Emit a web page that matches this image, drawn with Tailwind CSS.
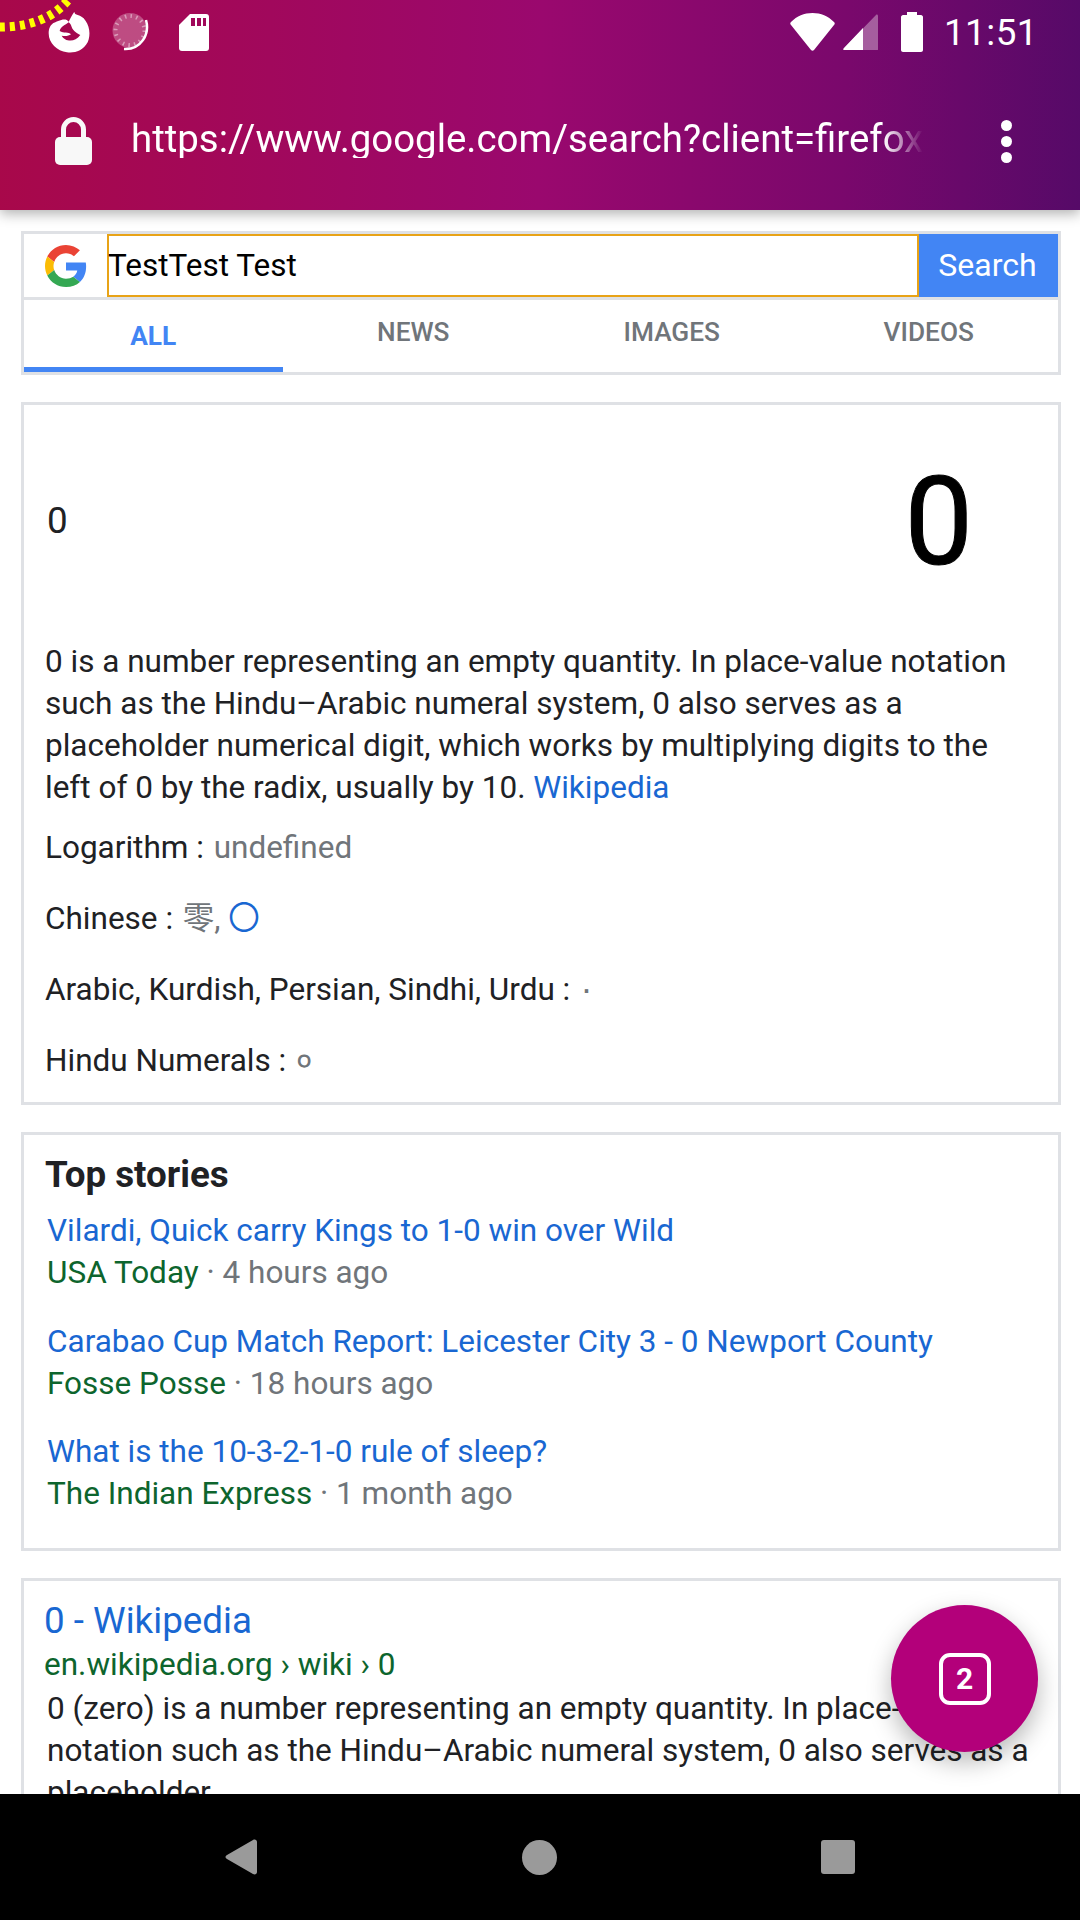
<!DOCTYPE html>
<html lang="en">
<head>
  <meta charset="UTF-8" />
  <meta name="viewport" content="width=device-width, initial-scale=1.0" />
  <title>Google search in Firefox</title>
  <script src="https://cdn.jsdelivr.net/npm/@tailwindcss/browser@4"></script>
</head>
<body class="font-['Roboto',sans-serif] text-[#202124] bg-white">
  <div class="relative w-[1080px] h-[1920px] overflow-hidden flex flex-col">

    <!-- Status bar + url bar -->
    <header class="relative z-10 h-[210px] shrink-0 bg-[linear-gradient(91deg,#a8084a_0%,#9a086e_50%,#7a086c_78%,#560a68_100%)] shadow-[0_4px_12px_rgba(0,0,0,0.3)] text-white">
      <div class="h-[64px] flex items-center pl-[47px] pr-[42px]">
        <svg class="w-[45px] h-[45px]" viewBox="140 25 135 135"><path fill="#fff" d="M222 30C222 42 240 38 250 50 268 70 272 100 262 122 248 148 222 155 200 152 170 148 145 125 145 95 145 80 150 72 158 65 170 60 195 45 205 60 210 50 215 40 222 30Z"/><path fill="#a4084f" d="M205 62C195 70 180 76 178 88 190 96 205 90 212 98 205 104 192 104 184 102 192 118 222 126 240 100 232 96 218 88 214 76 212 70 210 66 205 62Z"/></svg>
        <svg class="w-[38px] h-[40px] ml-[20px]" viewBox="0 0 38 40" fill="none"><circle cx="18" cy="18.500" r="17.500" fill="#fff" fill-opacity="0.28"/><circle cx="18" cy="18.500" r="14.500" stroke="#fff" stroke-opacity="0.45" stroke-width="4" stroke-dasharray="1.500 4.200"/><path d="M34 8C38 22 29 38 12 37" stroke="#fff" stroke-width="2.500"/></svg>
        <svg class="w-[30px] h-[37px] ml-[29px]" viewBox="0 0 30 37"><path d="M11 0h16c2 0 3 1 3 3v31c0 2-1 3-3 3H3c-2 0-3-1-3-3V11z" fill="#fff"/><path d="M12 4h4v8h-4zM18 4h4v8h-4zM24 4h3v8h-3z" fill="#a0085a"/></svg>
        <div class="ml-auto flex items-center">
          <svg class="w-[45px] h-[38px]" viewBox="0 0 45 38" fill="#fff"><path d="M1 9C7 3 14 0 22.500 0S38 3 44 9c1 1 1 2 0 3L24 37c-1 1-2 1-3 0L1 12c-1-1-1-2 0-3z"/></svg>
          <svg class="w-[35px] h-[36px] ml-[8px]" viewBox="0 0 35 36"><path d="M33 1c1-1 2 0 2 1v33c0 1 0 1-1 1H1c-1 0-1-1 0-2z" fill="#fff" fill-opacity="0.35"/><path d="M20 14v22H1c-1 0-1-1 0-2z" fill="#fff"/></svg>
          <svg class="w-[22px] h-[40px] ml-[23px]" viewBox="0 0 22 40" fill="#fff"><path d="M6 0h10v3h4c1 0 2 1 2 2v33c0 1-1 2-2 2H2c-1 0-2-1-2-2V5c0-1 1-2 2-2h4z"/></svg>
          <span class="ml-[21px] text-[36.750px] leading-none tracking-[0.5px] translate-y-[1px]">11:51</span>
        </div>
      </div>
      <div class="h-[146px] pt-[8px] flex items-center pl-[55px]">
        <svg class="w-[37px] h-[48px]" viewBox="0 0 37 48" fill="#f8f8f8"><path d="M6 21v-8.500a12.500 12.500 0 0 1 25 0V21h-5v-8.500a7.500 7.500 0 0 0-15 0V21z"/><rect y="20" width="37" height="28" rx="5"/></svg>
        <div class="ml-[39px] w-[792px] -translate-y-[2px] overflow-hidden whitespace-nowrap text-[38.400px] leading-none [mask-image:linear-gradient(to_right,#000_95%,transparent_100%)]">https://www.google.com/search?client=firefox-b-d&amp;q=0</div>
        <div class="ml-[78px] flex flex-col gap-[5px]">
          <span class="w-[11px] h-[11px] rounded-full bg-white"></span>
          <span class="w-[11px] h-[11px] rounded-full bg-white"></span>
          <span class="w-[11px] h-[11px] rounded-full bg-white"></span>
        </div>
      </div>
    </header>

    <!-- Yellow dotted overlay line -->
    <svg class="absolute left-0 top-0 z-20 w-[72px] h-[34px]" viewBox="0 0 72 34" fill="none"><path d="M0 27C22 27 50 22 68 0" stroke="#ffff00" stroke-width="9" stroke-dasharray="5 5"/></svg>

    <!-- Page content -->
    <main class="flex-1 min-h-0 overflow-hidden pl-[21px] pr-[19px] pt-[21px] flex flex-col gap-[27px]">
      <section class="border-[3px] border-[#dfe1e5] shrink-0">
        <div class="h-[63px] flex">
          <div class="w-[83px] flex items-center justify-center">
            <svg class="w-[42px] h-[42px]" viewBox="0 0 48 48"><path fill="#ea4335" d="M24 9.500c3.500 0 6.700 1.300 9.100 3.400l6.800-6.800C35.800 2.400 30.300 0 24 0 14.600 0 6.500 5.400 2.600 13.200l7.900 6.100C12.400 13.700 17.700 9.500 24 9.500z"/><path fill="#4285f4" d="M47 24.500c0-1.600-.1-3.100-.4-4.500H24v9h12.900c-.6 3-2.200 5.500-4.700 7.200l7.700 6c4.500-4.200 7.100-10.300 7.100-17.700z"/><path fill="#fbbc05" d="M10.500 28.700c-.5-1.400-.8-3-.8-4.700s.3-3.200.8-4.700l-7.900-6.100C1 16.400 0 20.100 0 24s1 7.600 2.600 10.800z"/><path fill="#34a853" d="M24 48c6.500 0 11.900-2.100 15.900-5.800l-7.700-6c-2.200 1.400-4.900 2.300-8.200 2.300-6.300 0-11.600-4.200-13.500-9.800l-7.900 6.100C6.500 42.600 14.600 48 24 48z"/></svg>
          </div>
          <div class="flex-1 border-[2.500px] border-[#e8a317] flex items-center text-[31.500px] text-black"><span class="-ml-[1px]">TestTest Test</span></div>
          <div class="w-[139px] bg-[#4285f4] text-white text-[32px] flex items-center justify-center"><span class="-translate-y-[1px] -translate-x-[1px]">Search</span></div>
        </div>
        <nav class="h-[75px] border-t-[3px] border-[#dfe1e5] grid grid-cols-4 text-[26.250px] font-medium text-[#70757a] text-center">
          <div class="border-b-[5px] border-[#4285f4] text-[#4285f4] font-bold pt-[17px]">ALL</div>
          <div class="pt-[13px] pl-[3px]">NEWS</div>
          <div class="pt-[13px] pl-[3px]">IMAGES</div>
          <div class="pt-[13px]">VIDEOS</div>
        </nav>
      </section>

      <section class="border-[3px] border-[#dfe1e5] h-[703px] shrink-0 px-[21px] text-[31.500px] leading-[42px]">
        <div class="h-[232px] flex items-center justify-between pl-[2px] pr-[64px]">
          <span class="text-[36.750px]">0</span>
          <span class="text-[122px] text-black leading-none translate-y-[2px] [-webkit-text-stroke:1px_#000] blur-[0.5px]">0</span>
        </div>
        <p class="mt-[4px]">0 is a number representing an empty quantity. In place-value notation such as the Hindu–Arabic numeral system, 0 also serves as a placeholder numerical digit, which works by multiplying digits to the left of 0 by the radix, usually by 10. <span class="text-[#1967d2]">Wikipedia</span></p>
        <div class="mt-[18px] flex flex-col gap-[29px]">
          <div class="h-[42px]">Logarithm : <span class="ml-[2px] text-[#70757a]">undefined</span></div>
          <div class="h-[42px]">Chinese : <span class="ml-[2px] leading-none text-[#70757a] font-['Roboto','Noto_Sans_CJK_SC',sans-serif]">零, <span class="text-[#1967d2]">〇</span></span></div>
          <div class="h-[42px]">Arabic, Kurdish, Persian, Sindhi, Urdu : <span class="leading-none text-[#70757a] font-['Noto_Sans','DejaVu_Sans',sans-serif]">٠</span></div>
          <div class="h-[42px]">Hindu Numerals : <span class="ml-[2px] leading-none text-[#70757a] font-['Noto_Sans','DejaVu_Sans',sans-serif]">०</span></div>
        </div>
      </section>

      <section class="border-[3px] border-[#dfe1e5] h-[419px] shrink-0 px-[21px] pt-[19px] text-[31.500px] leading-[42px]">
        <h2 class="text-[36.750px] font-bold leading-[42px] text-[#202124]">Top stories</h2>
        <div class="mt-[14px] pl-[2px] flex flex-col gap-[27px]">
          <div>
            <div class="text-[#1967d2]">Vilardi, Quick carry Kings to 1-0 win over Wild</div>
            <div class="text-[#70757a]"><span class="text-[#0d652d]">USA Today</span> · 4 hours ago</div>
          </div>
          <div>
            <div class="text-[#1967d2]">Carabao Cup Match Report: Leicester City 3 - 0 Newport County</div>
            <div class="text-[#70757a]"><span class="text-[#0d652d]">Fosse Posse</span> · 18 hours ago</div>
          </div>
          <div class="-mt-[1px]">
            <div class="text-[#1967d2]">What is the 10-3-2-1-0 rule of sleep?</div>
            <div class="text-[#70757a]"><span class="text-[#0d652d]">The Indian Express</span> · 1 month ago</div>
          </div>
        </div>
      </section>

      <section class="border-[3px] border-[#dfe1e5] shrink-0 px-[21px] pt-[18px] text-[31.500px] leading-[42px]">
        <h3 class="-ml-[1px] text-[36.750px] leading-[44px] text-[#1967d2]">0 - Wikipedia</h3>
        <div class="-ml-[1px] text-[#0d652d] mt-[1px]">en.wikipedia.org › wiki › 0</div>
        <p class="pl-[2px] mt-[2px]">0 (zero) is a number representing an empty quantity. In place-value notation such as the Hindu–Arabic numeral system, 0 also serves as a placeholder</p>
      </section>
    </main>

    <!-- Tabs button -->
    <div class="absolute z-20 left-[891px] top-[1605px] w-[147px] h-[147px] rounded-full bg-[#b3007a] shadow-[0_10px_24px_rgba(0,0,0,0.28)] flex items-center justify-center">
      <div class="w-[52px] h-[52px] rounded-[11px] border-[4.500px] border-white text-white font-bold text-[30px] leading-none flex items-center justify-center">2</div>
    </div>

    <!-- Android nav bar -->
    <footer class="relative z-10 h-[126px] shrink-0 bg-black flex items-center">
      <svg class="ml-[225px] w-[32px] h-[36px]" viewBox="0 0 32 36" fill="#9a9a9a"><path d="M28 1c2-1 4 0 4 2v30c0 2-2 3-4 2L2 20c-2-1-2-3 0-4z"/></svg>
      <span class="ml-[265px] w-[35px] h-[35px] rounded-full bg-[#9a9a9a]"></span>
      <span class="ml-[264px] w-[34px] h-[34px] rounded-[3px] bg-[#9a9a9a]"></span>
    </footer>
  </div>
</body>
</html>
